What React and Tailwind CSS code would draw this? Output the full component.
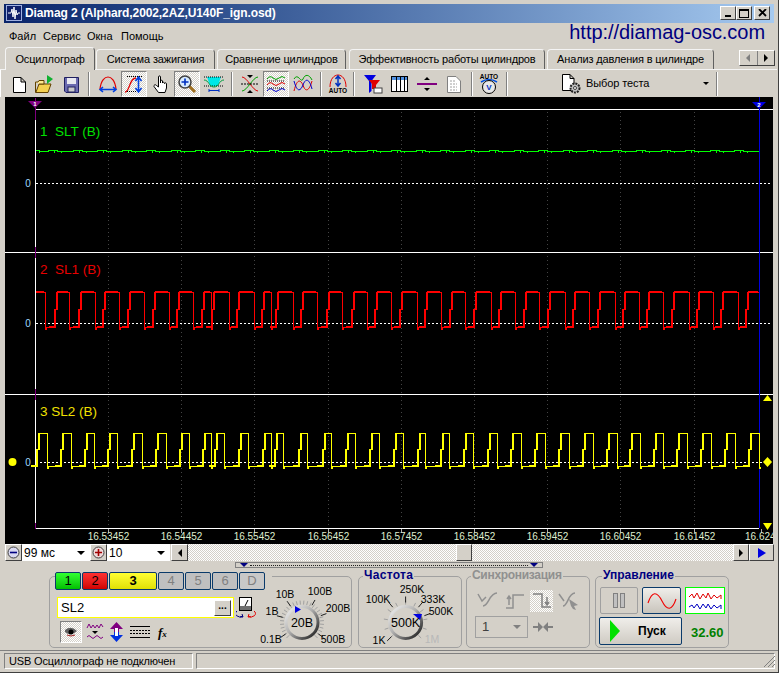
import React from "react";

const raised = "border border-t-white border-l-white border-r-[#404040] border-b-[#404040] bg-[#d4d0c8]";
const sunken = "border border-t-[#808080] border-l-[#808080] border-r-white border-b-white";
const dither = "bg-[repeating-conic-gradient(#ffffff_0_25%,#d4d0c8_0_50%)] bg-[length:2px_2px]";

const tickX = [108, 181, 254, 328, 401, 474, 547, 620, 694];
const tickLabels = ["16.53452", "16.54452", "16.55452", "16.56452", "16.57452", "16.58452", "16.59452", "16.60452", "16.61452"];

const ch2Rise = [57, 81, 105, 130, 155, 179, 204, 214, 239, 264, 278, 303, 329, 354, 377, 402, 427, 452, 476, 501, 526, 550, 575, 600, 625, 649, 674, 699, 723, 748];
const ch2Fall = [45, 69, 95, 119, 144, 169, 193, 211, 229, 254, 271, 293, 317, 342, 367, 391, 417, 441, 465, 491, 515, 539, 565, 589, 615, 639, 663, 689, 713, 738];
const ch3Rise = [39, 63, 87, 110, 134, 158, 182, 205, 217, 241, 265, 277, 301, 325, 348, 372, 396, 420, 443, 466, 490, 513, 537, 561, 585, 609, 632, 656, 679, 703, 727, 751];
const ch3Fall = [47, 71, 94, 117, 142, 166, 189, 211, 224, 248, 271, 283, 307, 331, 355, 379, 403, 425, 449, 473, 497, 521, 545, 569, 593, 617, 640, 663, 687, 711, 735, 759];

// сигнал 2 начинается с высокого уровня, сигнал 3 с низкого
function ch2Path() {
  let d = "M36 292.5 H45.5 V329.5 H46.5 V327.5";
  ch2Rise.forEach((r, i) => {
    const f = ch2Fall[i + 1];
    d += ` H${r - 1.5} V309.5 H${r + 0.5} V292.5`;
    d += f ? ` H${f + 0.5} V329.5 H${f + 1.5} V327.5` : " H759";
  });
  return d;
}
function ch2Thick() {
  const tops = ch2Rise.map((r, i) => `M${r} 292 H${(ch2Fall[i + 1] || 759) - 1}`).join(" ");
  return `M36 292 H44 ${tops} ` + ch2Rise.map((r) => `M${r - 2} 327 V309 M${r} 310 V292 M${r - 8} 327 H${r - 2}`).join(" ");
}
function ch3Path() {
  let d = "M36 466.5 H37.5";
  ch3Rise.forEach((r, i) => {
    const f = ch3Fall[i];
    d += ` V449.5 H${r + 0.5} V433.5 H${f + 0.5} V468.5 H${f + 1.5} V466.5`;
    if (ch3Rise[i + 1]) d += ` H${ch3Rise[i + 1] - 1.5}`;
  });
  return d;
}
function ch3Thick() {
  return ch3Rise.map((r) => `M${r - 2} 466 V449 M${r} 450 V433 M${r - 8} 466 H${r - 2}`).join(" ");
}
function ch1Path() {
  let d = "M36 150.5 H39.5 V153 V151.5";
  for (let x = 40; x < 735; x += 24.5) {
    const a = Math.round(x);
    d += ` H${a + 8} V150.5 H${a + 14} V153 V150.5 H${a + 17} V151.5 H${a + 21} V153 V151.5`;
  }
  return d + " H759";
}

function Scope() {
  return (
    <svg className="block w-[768px] h-[447px]" viewBox="5 97 768 447" style={{ shapeRendering: "crispEdges" }}>
      <rect x="5" y="97" width="768" height="447" fill="#000" />
      {tickX.map((x) => (
        <line key={x} x1={x + 0.5} x2={x + 0.5} y1="112" y2="528" stroke="#444" strokeDasharray="1 3" />
      ))}
      {[...tickX, 761].map((x) => (
        <line key={x} x1={x + 0.5} x2={x + 0.5} y1="529" y2="533" stroke="#aaa" />
      ))}
      <line x1="36" x2="773" y1="109.5" y2="109.5" stroke="#fff" />
      <line x1="5" x2="773" y1="252.5" y2="252.5" stroke="#fff" />
      <line x1="5" x2="773" y1="394.5" y2="394.5" stroke="#fff" />
      <line x1="36" x2="759" y1="528.5" y2="528.5" stroke="#fff" />
      <line x1="35.5" x2="35.5" y1="110" y2="528" stroke="#fff" />
      {[[98, 120], [247, 258], [389, 400], [523, 529]].map(([a, b]) => (
        <line key={a} x1="35.5" x2="35.5" y1={a} y2={b} stroke="#800080" />
      ))}
      <line x1="759.5" x2="759.5" y1="97" y2="528" stroke="#0000e0" />
      {[183.5, 323.5, 462.5].map((y) => (
        <g key={y}>
          <line x1="36" x2="772" y1={y} y2={y} stroke="#fff" strokeDasharray="2 2" />
          <text x="28" y={y + 3.5} fontSize="10" textAnchor="middle" fill="#9fd8ff">0</text>
        </g>
      ))}
      <path d={ch1Path()} fill="none" stroke="#00ff00" />
      <path d={ch2Path()} fill="none" stroke="#ff0000" />
      <path d={ch2Thick()} fill="none" stroke="#ff0000" strokeWidth="2" />
      <path d={ch3Path()} fill="none" stroke="#ffff00" />
      <path d={ch3Thick()} fill="none" stroke="#ffff00" strokeWidth="2" />
      <text x="40" y="136" fontSize="13.5" fill="#00e000" xmlSpace="preserve">1  SLT (B)</text>
      <text x="40" y="274" fontSize="13.5" fill="#e80000" xmlSpace="preserve">2  SL1 (B)</text>
      <text x="40" y="416" fontSize="13.5" fill="#f0e000">3 SL2 (B)</text>
      <path d="M28 101 H42 L35 108 Z" fill="#800080" style={{ shapeRendering: "auto" }} />
      <text x="35" y="106" fontSize="6" fontWeight="700" textAnchor="middle" fill="#fff">1</text>
      <path d="M752 102 H766 L759 109 Z" fill="#0000e0" style={{ shapeRendering: "auto" }} />
      <text x="759" y="107" fontSize="6" fontWeight="700" textAnchor="middle" fill="#fff">2</text>
      <g fill="#ffff00" style={{ shapeRendering: "auto" }}>
        <circle cx="12.5" cy="462" r="4" />
        <path d="M763 401 H772 L767.5 395 Z" />
        <path d="M763 523 H772 L767.5 530 Z" />
        <path d="M767.5 457 L772 462 L767.5 467 L763 462 Z" />
      </g>
      <g fontSize="10" textAnchor="middle" fill="#dfeccf" style={{ shapeRendering: "auto" }}>
        {tickLabels.map((t, i) => (
          <text key={t} x={tickX[i] + 0.5} y="540">{t}</text>
        ))}
        <text x="745" y="540" textAnchor="start">16.624</text>
      </g>
    </svg>
  );
}

/* ---------- значки панели инструментов ---------- */
const Ico = ({ children, w = 20, h = 20 }) => (
  <svg width={w} height={h} viewBox={`0 0 ${w} ${h}`} fill="none">{children}</svg>
);
const NewIcon = () => (
  <Ico><path d="M4.5 3.5 H12 L16.5 8 V18.5 H4.5 Z M12 3.5 V8 H16.5" fill="#fff" stroke="#000" /></Ico>
);
const OpenIcon = () => (
  <Ico w={22}>
    <path d="M2.5 8 V18.5 H15 L18 10 H6 L3 18" fill="#f4d050" stroke="#604000" />
    <path d="M2.5 8 H5 L6 6.5 H11 V10 H6" fill="#ffe890" stroke="#604000" />
    <path d="M14 1 L20 5 L14 10 Z" fill="#10b030" />
  </Ico>
);
const SaveIcon = () => (
  <Ico>
    <path d="M3.5 3.5 H17.5 V18.5 H5 L3.5 17 Z" fill="#6a6ab0" stroke="#202060" />
    <rect x="6" y="4" width="9" height="6" fill="#e8e8f0" />
    <rect x="7" y="13" width="7" height="5" fill="#c8c8c8" stroke="#202060" />
  </Ico>
);
const ArcH = () => (
  <Ico>
    <path d="M2 15 C3 6 7 3 10 3 C13 3 17 6 18 15" stroke="#e00000" strokeWidth="1.2" />
    <path d="M3 15.5 H17 M5 13 L2 15.5 L5 18 M15 13 L18 15.5 L15 18" stroke="#0040e0" strokeWidth="1.6" />
  </Ico>
);
const ArcV = () => (
  <Ico>
    <path d="M1 18 C6 18 5 4 12 4" stroke="#e00000" strokeWidth="1.3" />
    <path d="M3 2.5 H19 M3 17.5 H12" stroke="#000" strokeDasharray="1 1" />
    <path d="M14.5 4 V17 M11.5 7 L14.5 3 L17.5 7 M11.5 14 L14.5 18 L17.5 14" stroke="#0040e0" strokeWidth="1.6" />
  </Ico>
);
const HandIcon = () => (
  <Ico>
    <path d="M7.5 10 V3 C7.5 1.5 9.5 1.5 9.5 3 V9 V7 C9.5 6 11.5 6 11.5 7 V9 C11.5 8 13.5 8 13.5 9.5 C13.5 8.5 15.5 8.5 15.5 10 V14 L14 18.5 H7.5 L3 12.5 C2.5 11 4.5 10 5.5 11.5 L7.5 13 Z" fill="#fff" stroke="#000" />
  </Ico>
);
const ZoomIcon = () => (
  <Ico>
    <path d="M12 12 L18 18" stroke="#a07020" strokeWidth="3" />
    <circle cx="8" cy="8" r="6" fill="#d8ecff" stroke="#404040" strokeWidth="1.5" />
    <path d="M4.5 8 H11.5 M8 4.5 V11.5" stroke="#0030c0" strokeWidth="1.6" />
  </Ico>
);
const CyanIcon = () => (
  <Ico w={22}>
    <path d="M4 3 H18 L15 12 H7 Z" fill="#00e8e8" />
    <path d="M1 3 H21 M1 12 H21" stroke="#000" strokeDasharray="1 1" />
    <path d="M1 6 C6 6 6 13 11 13 C16 13 16 6 21 6" stroke="#00a040" />
    <path d="M6 15 V18 M16 15 V18 M6 16.5 H16" stroke="#0030c0" />
  </Ico>
);
const CrossIcon = () => (
  <Ico>
    <path d="M2 3 C7 3 13 17 18 17" stroke="#e00000" />
    <path d="M2 17 C7 17 13 3 18 3" stroke="#00a000" />
    <path d="M1 10 H19" stroke="#000" strokeDasharray="2 1" />
    <path d="M7 1 H13 L10 4 Z M7 19 H13 L10 16 Z" fill="#000" />
  </Ico>
);
const StackIcon = () => (
  <Ico>
    <path d="M1 5 Q4 1 7 4 T13 4 T19 4" stroke="#00a000" />
    <path d="M1 7 H19 M1 14 H19" stroke="#000" strokeDasharray="1 1" />
    <path d="M1 11 Q4 7 7 10 T13 10 T19 10" stroke="#e00000" />
    <path d="M1 17 Q4 13 7 16 T13 16 T19 16" stroke="#0000d0" />
  </Ico>
);
const OverIcon = () => (
  <Ico>
    <path d="M1 5 C5 -2 8 10 10 5 C12 0 16 0 19 6" stroke="#00a000" />
    <path d="M1 17 C4 5 7 5 10 11 C12 18 16 18 19 7" stroke="#e00000" />
    <path d="M1 7 C4 18 7 18 10 11 C12 5 16 3 19 15" stroke="#0000d0" />
  </Ico>
);
const AutoIcon = () => (
  <Ico>
    <path d="M2 13 C2 5 6 1 10 1 C14 1 18 5 18 13" stroke="#e00000" />
    <path d="M10 2 V12 M7.5 5 L10 2 L12.5 5 M7.5 9 L10 12 L12.5 9" stroke="#0030c0" strokeWidth="1.5" />
    <text x="10" y="19" fontSize="6.5" fontWeight="700" textAnchor="middle" fill="#000">AUTO</text>
  </Ico>
);
const FilterIcon = () => (
  <Ico>
    <path d="M1 1 H13 L8.5 7 V17 L6 19 V7 Z" fill="#0000e0" />
    <path d="M6 6 H17 L13 11 V15 H9 V10 Z" fill="#e00000" />
    <rect x="11" y="14" width="8" height="5" fill="#fff" stroke="#404040" />
  </Ico>
);
const TableIcon = () => (
  <Ico>
    <rect x="1.5" y="2.5" width="16" height="15" fill="#fff" stroke="#000" />
    <rect x="2" y="3" width="15" height="3" fill="#5090e0" />
    <path d="M6.5 3 V17 M10.5 3 V17 M14.5 3 V17" stroke="#000" />
  </Ico>
);
const MidIcon = () => (
  <Ico>
    <path d="M0 10 H20" stroke="#800080" strokeWidth="2" />
    <path d="M7 6 H13 L10 3 Z M7 14 H13 L10 17 Z" fill="#000" />
  </Ico>
);
const CheckIcon = () => (
  <Ico>
    <path d="M3.5 2.5 H12 L16.5 7 V18.5 H3.5 Z" fill="#fff" stroke="#808080" />
    <path d="M6 7 H12 M6 10 H13 M6 13 H13 M6 16 H13" stroke="#a0a0a0" strokeDasharray="2 1" />
  </Ico>
);
const AutoV = () => (
  <Ico h={22}>
    <text x="10" y="6" fontSize="6.5" fontWeight="700" textAnchor="middle" fill="#000">AUTO</text>
    <path d="M2 9 Q10 4 18 9" stroke="#0050e0" strokeWidth="1.5" />
    <circle cx="10" cy="14" r="6.5" fill="#e8e8e8" stroke="#000" />
    <text x="10" y="17" fontSize="8" fontWeight="700" textAnchor="middle" fill="#0030c0">V</text>
  </Ico>
);
const TestIcon = () => (
  <Ico w={22} h={22}>
    <path d="M1.5 1.5 H9 L13 5.5 V17.5 H1.5 Z M9 1.5 V5.5 H13" fill="#fff" stroke="#000" />
    <circle cx="14" cy="15" r="4.5" fill="#c0c0c0" stroke="#202020" strokeDasharray="2 1" strokeWidth="2" />
    <circle cx="14" cy="15" r="1.5" fill="#fff" stroke="#404040" />
  </Ico>
);

const Tool = ({ className, pressed, children }) => (
  <div className={`h-[26px] flex items-center justify-center shrink-0 ${pressed ? `${dither} border border-t-[#808080] border-l-[#808080] border-r-white border-b-white` : ""} ${className}`}>
    {children}
  </div>
);
const Sep = ({ className = "w-[10px]" }) => (
  <div className={`h-[24px] shrink-0 flex justify-center ${className}`}>
    <div className="w-[2px] h-full border-l border-l-[#808080] border-r border-r-white" />
  </div>
);

function Toolbar() {
  return (
    <div className="h-[27px] flex items-center pl-[5px] border-l border-l-white">
      <Tool className="w-[25px]"><NewIcon /></Tool>
      <Tool className="w-[26px]"><OpenIcon /></Tool>
      <Tool className="w-[27px]"><SaveIcon /></Tool>
      <Sep />
      <Tool className="w-[27px]"><ArcH /></Tool>
      <Tool className="w-[26px]" pressed><ArcV /></Tool>
      <Tool className="w-[27px]"><HandIcon /></Tool>
      <Tool className="w-[26px]" pressed><ZoomIcon /></Tool>
      <Tool className="w-[27px]"><CyanIcon /></Tool>
      <Sep />
      <Tool className="w-[26px]"><CrossIcon /></Tool>
      <Tool className="w-[26px]" pressed><StackIcon /></Tool>
      <Tool className="w-[27px]"><OverIcon /></Tool>
      <Sep />
      <Tool className="w-[23px]"><AutoIcon /></Tool>
      <Sep />
      <Tool className="w-[28px]"><FilterIcon /></Tool>
      <Tool className="w-[26px]"><TableIcon /></Tool>
      <Tool className="w-[27px]"><MidIcon /></Tool>
      <Tool className="w-[27px]"><CheckIcon /></Tool>
      <Sep />
      <Tool className="w-[24px]"><AutoV /></Tool>
      <Sep className="w-[11px]" />
      <div className="w-[204px] shrink-0 flex items-center pl-[49px] text-[11px] tracking-[-0.1px] text-black whitespace-nowrap">
        <TestIcon />
        <span className="ml-[3px]">Выбор теста</span>
        <span className="ml-[54px] w-0 h-0 border-x-[3px] border-x-transparent border-t-[3px] border-t-black" />
      </div>
      <Sep className="w-[2px]" />
    </div>
  );
}

const Tab = ({ className, active, children }) => (
  <div className={`shrink-0 flex items-center justify-center whitespace-nowrap rounded-t-[4px] border border-b-0 border-t-[#f4f4f4] border-l-[#f4f4f4] border-r-[#606060] bg-[#d4d0c8] ${active ? "h-[23px] relative z-10 -mb-[1px]" : "h-[20px]"} ${className}`}>
    {children}
  </div>
);

function Tabs() {
  return (
    <div className="h-[21px] flex items-end pl-[5px] pr-[2px] text-[11px] tracking-[-0.15px] text-black border-b border-b-[#f4f4f4]">
      <Tab className="w-[90px]" active>Осциллограф</Tab>
      <Tab className="w-[119px] ml-[1px]">Система зажигания</Tab>
      <Tab className="w-[129px] ml-[2px]">Сравнение цилиндров</Tab>
      <Tab className="w-[196px] ml-[3px]">Эффективность работы цилиндров</Tab>
      <Tab className="w-[167px] ml-[2px]">Анализ давления в цилиндре</Tab>
      <div className={`ml-auto mb-[3px] w-[36px] h-[16px] flex ${raised}`}>
        <div className="flex-1 flex items-center justify-center border-r border-r-[#808080]">
          <span className="w-0 h-0 border-y-[4px] border-y-transparent border-r-[4px] border-r-[#808080]" />
        </div>
        <div className="flex-1 flex items-center justify-center">
          <span className="w-0 h-0 border-y-[4px] border-y-transparent border-l-[4px] border-l-black" />
        </div>
      </div>
    </div>
  );
}

function TitleBar() {
  return (
    <div className="h-[19px] flex items-center bg-gradient-to-r from-[#0a246a] to-[#a6caf0] pl-[2px] pr-[4px]">
      <svg width="16" height="16" viewBox="0 0 16 16" className="shrink-0">
        <rect x="0.5" y="0.5" width="15" height="15" fill="#10206a" stroke="#a0b0e0" />
        <path d="M2 8 H5 L6 4 L7 12 L8 2 L9 14 L10 5 L11 10 L12 8 H14" stroke="#fff" fill="none" />
      </svg>
      <span className="ml-[3px] text-[12px] tracking-[-0.1px] font-bold text-white whitespace-nowrap">Diamag 2 (Alphard,2002,2AZ,U140F_ign.osd)</span>
      <div className="ml-auto flex items-center">
        <div className={`w-[16px] h-[14px] flex items-end justify-center pb-[2px] ${raised}`}><div className="w-[6px] h-[2px] bg-black" /></div>
        <div className={`w-[16px] h-[14px] flex items-center justify-center ${raised}`}><div className="w-[10px] h-[9px] border border-t-2 border-black" /></div>
        <div className={`w-[16px] h-[14px] ml-[2px] flex items-center justify-center ${raised}`}>
          <svg width="9" height="8" viewBox="0 0 9 8"><path d="M1 0 L8 7 M8 0 L1 7" stroke="#000" strokeWidth="1.8" /></svg>
        </div>
      </div>
    </div>
  );
}

function MenuBar() {
  return (
    <div className="h-[27px] flex items-center pl-[5px] pr-[9px] text-[11px] text-black relative">
      <span className="w-[26px]">Файл</span>
      <span className="ml-[8px] w-[36px]">Сервис</span>
      <span className="ml-[8px] w-[26px]">Окна</span>
      <span className="ml-[8px]">Помощь</span>
      <span className="ml-auto -mt-[8px] text-[20px] tracking-[-0.05px] text-[#000080] leading-none">http://diamag-osc.com</span>
    </div>
  );
}

/* ---------- строка масштаба и прокрутки ---------- */
const Tri = ({ className }) => <span className={`w-0 h-0 border-x-[4px] border-x-transparent border-t-[4px] ${className}`} />;

function RoundBtn({ plus }) {
  return (
    <div className={`w-[17px] h-[17px] shrink-0 flex items-center justify-center ${raised}`}>
      <svg width="13" height="13" viewBox="0 0 13 13">
        <circle cx="6.5" cy="6.5" r="5.5" fill={plus ? "#f0d8d8" : "#d8d8f0"} stroke="#404040" />
        <path d={plus ? "M3 6.5 H10 M6.5 3 V10" : "M3 6.5 H10"} stroke={plus ? "#a00000" : "#000080"} strokeWidth="1.6" />
      </svg>
    </div>
  );
}
function ScrollRow() {
  return (
    <div className="h-[17px] flex pl-[5px] text-[12px] text-black">
      <RoundBtn />
      <div className="w-[68px] shrink-0 bg-white flex items-center pl-[2px] pr-[5px] justify-between">99 мс <Tri className="border-t-black" /></div>
      <RoundBtn plus />
      <div className="w-[63px] shrink-0 bg-white flex items-center pl-[2px] pr-[5px] justify-between">10 <Tri className="border-t-black" /></div>
      <div className={`w-[17px] shrink-0 flex items-center justify-center ml-[1px] ${raised}`}>
        <span className="w-0 h-0 border-y-[4px] border-y-transparent border-r-[4px] border-r-black" />
      </div>
      <div className={`flex-none w-[545px] flex ${dither}`}>
        <div className={`w-[16px] ml-[268px] ${raised}`} />
      </div>
      <div className={`w-[16px] shrink-0 flex items-center justify-center ${raised}`}>
        <span className="w-0 h-0 border-y-[4px] border-y-transparent border-l-[4px] border-l-black" />
      </div>
      <div className={`w-[25px] shrink-0 flex items-center justify-center ${raised}`}>
        <span className="w-0 h-0 border-y-[5px] border-y-transparent border-l-[8px] border-l-[#0000e0]" />
      </div>
    </div>
  );
}
function Splitter() {
  return (
    <div className="h-[8px] pt-[1px]">
      <div className="ml-[235px] w-[308px] h-[6px] border border-[#808080] flex items-center px-[4px] justify-between">
        <Tri className="border-t-[#000080] shrink-0" />
        <div className="flex-1 mx-[2px] border-t border-dotted border-t-[#202020]" />
        <Tri className="border-t-[#000080] shrink-0" />
      </div>
    </div>
  );
}

/* ---------- ручки ---------- */
function Knob({ cx, cy, box, value, ticks, majors, labels, pointer, id }) {
  const pt = (a, r) => [cx + r * Math.sin((a * Math.PI) / 180), cy - r * Math.cos((a * Math.PI) / 180)];
  const seg = (a, r1, r2) => {
    const [x1, y1] = pt(a, r1);
    const [x2, y2] = pt(a, r2);
    return `M${x1} ${y1} L${x2} ${y2}`;
  };
  return (
    <svg className="block shrink-0 overflow-visible" width={box[2]} height={box[3]} viewBox={box.join(" ")}>
      <defs>
        <linearGradient id={id} x1="0" y1="0" x2="1" y2="1">
          <stop offset="0" stopColor="#f4f4f4" />
          <stop offset="0.45" stopColor="#b0b0b0" />
          <stop offset="1" stopColor="#101010" />
        </linearGradient>
      </defs>
      <path d={ticks.map((a) => seg(a, 18, 22)).join(" ")} stroke="#a0a0a0" />
      <path d={majors.map((a) => seg(a, 20, 26)).join(" ")} stroke="#202020" />
      <circle cx={cx} cy={cy} r="16" fill="#d4d0c8" stroke={`url(#${id})`} strokeWidth="3" />
      <path d={pointer} fill="#0000e0" />
      <text x={cx} y={cy + 4.5} fontSize="12.5" textAnchor="middle" fill="#000">{value}</text>
      <g fontSize="10.5" textAnchor="middle" fill="#000">
        {labels.map(([t, x, y, c]) => (
          <text key={t} x={x} y={y} fill={c || "#000"}>{t}</text>
        ))}
      </g>
    </svg>
  );
}
const range = (a, b, n) => Array.from({ length: n }, (_, i) => a + ((b - a) * i) / (n - 1));

const Group = ({ className, legend, legendClass, children }) => (
  <div className={`relative h-[72px] shrink-0 rounded-[5px] border border-[#a0a0a0] ${className}`}>
    {legend && (
      <span className={`absolute -top-[9px] left-[4px] px-[1px] bg-[#d4d0c8] text-[12px] font-bold leading-[15px] whitespace-nowrap ${legendClass}`}>{legend}</span>
    )}
    {children}
  </div>
);

const ChBtn = ({ className, children }) => (
  <div className={`h-[18px] shrink-0 rounded-[2px] border border-[#0a3a6a] flex items-center justify-center text-[13px] ${className}`}>{children}</div>
);

function ChannelGroup() {
  return (
    <Group className="w-[303px] ml-[49px] flex">
      <div className="w-[211px] shrink-0 -mt-[5px] pl-[5px]">
        <div className="flex gap-[1px] bg-[#d4d0c8] w-[217px] pr-[7px] h-[18px]">
          <ChBtn className="w-[26px] bg-gradient-to-b from-[#30ff30] to-[#00c000] text-black">1</ChBtn>
          <ChBtn className="w-[26px] bg-gradient-to-b from-[#ff3030] to-[#d00000] text-black">2</ChBtn>
          <ChBtn className="w-[48px] bg-gradient-to-b from-[#ffff30] to-[#e0e000] text-black font-bold">3</ChBtn>
          <ChBtn className="w-[26px] bg-[#c0c0c0] text-[#808080]">4</ChBtn>
          <ChBtn className="w-[26px] bg-[#c0c0c0] text-[#808080]">5</ChBtn>
          <ChBtn className="w-[26px] bg-[#c0c0c0] text-[#808080]">6</ChBtn>
          <ChBtn className="w-[26px] bg-[#c8c8c8] text-[#808080]">D</ChBtn>
        </div>
        <div className="mt-[7px] flex items-center">
          <div className="ml-[2px] w-[177px] h-[21px] bg-white border border-[#ffff00] flex items-center pl-[3px] pr-[2px] text-[13px] text-black">
            SL2
            <div className={`ml-auto w-[17px] h-[16px] flex items-center justify-center text-[10px] font-bold leading-none pb-[4px] ${raised}`}>...</div>
          </div>
          <svg width="20" height="21" viewBox="0 0 20 21" className="ml-[2px] shrink-0">
            <rect x="3.5" y="0.5" width="12" height="13" fill="#fff" stroke="#000" />
            <rect x="4" y="9" width="11" height="4" fill="#707070" />
            <path d="M9 9 L12 3" stroke="#000" />
            <path d="M1 14 A4 3 0 0 0 7 19 M6 17 L7 20 L4 20" stroke="#000080" fill="none" />
            <path d="M18 14 A4 3 0 0 1 12 19 M13 17 L12 20 L15 20" stroke="#e00000" fill="none" />
          </svg>
        </div>
        <div className="mt-[3px] flex items-center h-[22px]">
          <div className={`ml-[5px] w-[22px] h-[22px] flex items-center justify-center border border-[#808080] border-r-white border-b-white ${dither}`}>
            <svg width="14" height="10" viewBox="0 0 14 10">
              <path d="M1 3 Q7 -2 13 4 Q7 10 1 5 Z" fill="#606060" />
              <circle cx="7" cy="5" r="2.5" fill="#000" />
              <path d="M3 8 Q7 10 11 8" stroke="#a02020" fill="none" />
            </svg>
          </div>
          <svg width="18" height="18" viewBox="0 0 18 18" className="ml-[4px]" fill="none">
            <path d="M1 5 L3 1 L5 5 L7 2 L9 5 L11 2 L13 5 L15 1 L17 4" stroke="#800080" />
            <path d="M6 8 H12 L9 11 Z" fill="#000" />
            <path d="M1 14 Q3 11 5 14 T9 14 T13 14 T17 14" stroke="#800080" />
          </svg>
          <svg width="15" height="20" viewBox="0 0 15 20" className="ml-[5px]">
            <path d="M7.5 0 L14 7 H10 V10 H5 V7 H1 Z" fill="#800080" />
            <path d="M7.5 20 L14 13 H10 V10 H5 V13 H1 Z" fill="#0030e0" />
            <path d="M6 6 H9 V14 H6 Z" fill="#fff" />
          </svg>
          <svg width="20" height="14" viewBox="0 0 20 14" className="ml-[6px]">
            <path d="M0 1.5 H20 M0 12.5 H20" stroke="#000" />
            <path d="M0 5.5 H20 M0 8.5 H20" stroke="#000" strokeDasharray="2 1" />
          </svg>
          <span className="ml-[8px] font-['Liberation_Serif'] italic font-bold text-[13px] text-black leading-none">f<span className="text-[9px]">x</span></span>
        </div>
      </div>
      <Knob
        id="k1"
        cx={302}
        cy={622.5}
        box={[261, 577, 90, 70]}
        value="20В"
        ticks={range(-135, 135, 28)}
        majors={[-125, -75, -35, 30, 70, 125]}
        pointer="M295 606 L301 609.5 L295 613 Z"
        labels={[["0.1В", 271, 643], ["1В", 272, 615], ["10В", 285, 598], ["100В", 320, 595], ["200В", 338, 612], ["500В", 333, 643]]}
      />
    </Group>
  );
}

function FreqGroup() {
  return (
    <Group className="w-[104px] ml-[6px]" legend="Частота" legendClass="text-[#000080] tracking-[0.3px]">
      <Knob
        id="k2"
        cx={405.6}
        cy={622.5}
        box={[359, 577, 102, 70]}
        value="500K"
        ticks={range(-135, 135, 11)}
        majors={[-135, -40, 0, 40, 70]}
        pointer="M413 614 H422 L420 620 Z"
        labels={[["100K", 378, 603], ["250K", 412, 593], ["333K", 433, 603], ["500K", 441, 615], ["1K", 379, 644], ["1M", 432, 643, "#b8b8b8"]]}
      />
    </Group>
  );
}

function SyncGroup() {
  const g = "#909090";
  return (
    <Group className="w-[124px] ml-[4px]" legend="Синхронизация" legendClass="text-[#909090] tracking-[-0.3px]">
      <div className="mt-[13px] flex items-center h-[22px] pl-[9px] gap-[5px]">
        <svg width="24" height="20" viewBox="0 0 24 20" fill="none">
          <path d="M2 3 L6 10 L10 6 M7 15 C13 15 13 2 21 2" stroke={g} strokeWidth="1.5" />
        </svg>
        <svg width="20" height="20" viewBox="0 0 20 20" fill="none">
          <path d="M1 17 H8 V4 H19 M4 6 V14 M2 8 L4 5 L6 8" stroke={g} strokeWidth="1.5" />
        </svg>
        <div className={`w-[23px] h-[22px] flex items-center justify-center ${dither}`}>
          <svg width="20" height="20" viewBox="0 0 20 20" fill="none">
            <path d="M1 3 H10 V16 H19 M15 6 V14 M13 11 L15 14 L17 11" stroke="#808080" strokeWidth="1.5" />
          </svg>
        </div>
        <svg width="22" height="20" viewBox="0 0 22 20" fill="none">
          <path d="M1 3 L6 10 M5 15 C10 15 10 2 17 2" stroke={g} strokeWidth="1.5" />
          <path d="M11 8 L20 14 L16 15 L18 19 L15 18 L13 15 Z" fill={g} />
        </svg>
      </div>
      <div className="mt-[4px] flex items-center pl-[8px]">
        <div className="w-[53px] h-[22px] border border-[#a0a0a0] flex items-center pl-[6px] pr-[6px] justify-between text-[13px] text-[#404040]">
          1 <Tri className="border-t-[#808080]" />
        </div>
        <svg width="20" height="10" viewBox="0 0 20 10" className="ml-[5px]">
          <path d="M0 5 H6 M20 5 H14" stroke="#808080" strokeWidth="2" />
          <path d="M5 0 L10 5 L5 10 Z M15 0 L10 5 L15 10 Z" fill="#808080" />
        </svg>
      </div>
    </Group>
  );
}

function ControlGroup() {
  return (
    <Group className="w-[134px] ml-[5px]" legend="Управление" legendClass="text-[#000080] left-[6px]">
      <div className="mt-[10px] flex pl-[4px]">
        <div className="w-[38px] h-[27px] rounded-[2px] border border-[#a0a0a0] flex items-center justify-center gap-[2px]">
          <div className="w-[5px] h-[15px] border border-[#808080] bg-[#c0c0c0]" />
          <div className="w-[5px] h-[15px] border border-[#808080] bg-[#c0c0c0]" />
        </div>
        <div className="ml-[4px] w-[39px] h-[27px] rounded-[2px] border border-[#0a3a6a] bg-gradient-to-b from-[#f0eeea] to-[#c8c4bc] flex items-center justify-center">
          <svg width="30" height="24" viewBox="0 0 30 24" fill="none">
            <path d="M1 14 C5 2 10 2 15 12 C20 22 25 22 29 10" stroke="#f00000" strokeWidth="1.1" />
          </svg>
        </div>
        <div className="ml-[4px] w-[40px] h-[27px] border border-[#00ff00] bg-white flex items-center justify-center">
          <svg width="34" height="22" viewBox="0 0 34 22" fill="none">
            <path d="M1 7 L4 4 L6 8 L9 3 L12 9 L15 4 L18 8 L20 3 L23 9 L26 5 L29 8 L33 5 V9" stroke="#e00000" />
            <path d="M1 17 L4 15 L6 18 L9 14 L12 19 L15 14 L18 18 L20 14 L23 19 L26 15 L29 18 L33 15 V19" stroke="#0000c0" />
          </svg>
        </div>
      </div>
      <div className="mt-[3px] flex items-center">
        <div className="ml-[3px] w-[83px] h-[28px] rounded-[2px] border border-[#0a3a6a] bg-gradient-to-b from-[#f0eeea] to-[#cfcbc3] flex items-center">
          <svg width="12" height="24" viewBox="0 0 12 24" className="ml-[9px] shrink-0">
            <path d="M1 1 L11 12 L1 23 Z" fill="#00e000" />
          </svg>
          <span className="ml-[17px] text-[12px] font-bold text-black">Пуск</span>
        </div>
        <span className="ml-[9px] mt-[4px] text-[13px] font-bold text-[#008000]">32.60</span>
      </div>
    </Group>
  );
}

function StatusBar() {
  return (
    <div className="h-[22px] pt-[2px] border-t border-t-[#808080] flex text-[11px] tracking-[-0.15px] text-black relative">
      <div className={`ml-[4px] w-[189px] h-[16px] flex items-center pl-[4px] whitespace-nowrap ${sunken}`}>USB Осциллограф не подключен</div>
      <div className={`ml-[3px] w-[579px] h-[16px] ${sunken}`} />
      <svg width="12" height="12" viewBox="0 0 12 12" className="absolute right-[3px] top-[4px]">
        <path d="M1 12 L12 1 M5 12 L12 5 M9 12 L12 9" stroke="#808080" />
      </svg>
    </div>
  );
}

export default function App() {
  return (
    <div className="w-[779px] h-[673px] overflow-hidden bg-[#d4d0c8] pt-[4px] px-[4px] flex flex-col font-['Liberation_Sans',sans-serif] border-r border-b border-r-[#404040] border-b-[#404040]">
      <div className="flex flex-col flex-1 min-h-0">
        <TitleBar />
        <MenuBar />
        <div className="-ml-[4px] -mr-[3px]">
          <Tabs />
          <Toolbar />
          <div className="pl-[5px] flex">
            <Scope />
          </div>
          <ScrollRow />
          <Splitter />
          <div className="h-[81px] pt-[7px] flex">
            <ChannelGroup />
            <FreqGroup />
            <SyncGroup />
            <ControlGroup />
          </div>
        </div>
        <div className="-mx-[4px] flex-1">
          <StatusBar />
        </div>
      </div>
    </div>
  );
}
